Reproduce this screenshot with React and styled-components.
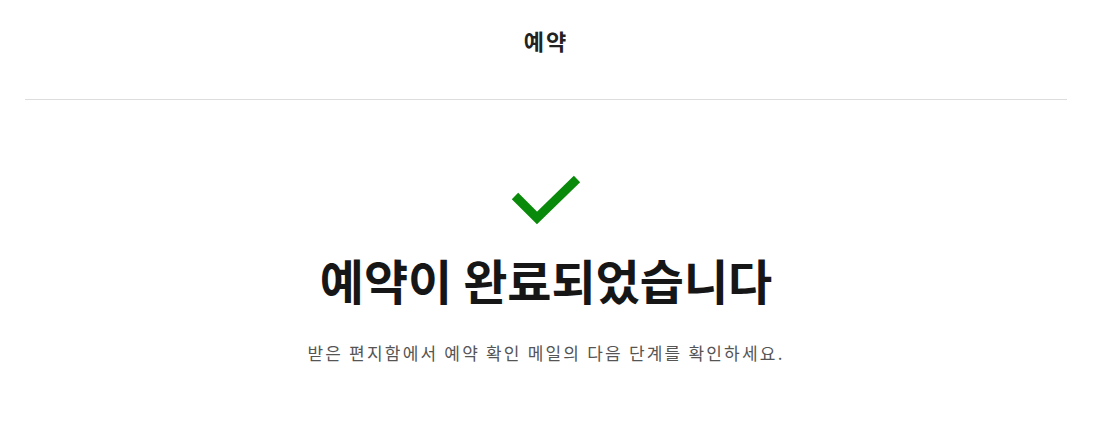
import React from "react";
import styled, { createGlobalStyle } from "styled-components";

const GlobalStyle = createGlobalStyle`
  html, body {
    margin: 0;
    padding: 0;
    background: #fff;
  }
  body {
    font-family: "Noto Sans CJK KR", "Noto Sans", sans-serif;
    color: #222;
  }
`;

const Page = styled.div`
  display: flex;
  flex-direction: column;
  padding: 0 26px 0 25px;
`;

const Header = styled.header`
  height: 75px;
  padding-top: 24px;
  display: flex;
  align-items: flex-start;
  justify-content: center;
  border-bottom: 1px solid #ddd;
`;

const HeaderTitle = styled.h1`
  margin: 0;
  font-size: 22px;
  line-height: 33px;
  letter-spacing: 2px;
  font-weight: 700;
  color: #222;
`;

const Body = styled.main`
  display: flex;
  flex-direction: column;
  align-items: center;
  padding-top: 75px;
`;

const Check = styled.svg`
  width: 70px;
  height: 52px;
  display: block;
`;

const Title = styled.h2`
  margin: 21px 0 0;
  font-size: 48px;
  font-weight: 700;
  line-height: 62px;
  color: #161616;
`;

const Message = styled.p`
  margin: 30px 0 0;
  font-size: 17px;
  line-height: 25px;
  letter-spacing: 2.2px;
  color: #555;
`;

export default function App() {
  return (
    <>
      <GlobalStyle />
      <Page>
        <Header>
          <HeaderTitle>예약</HeaderTitle>
        </Header>
        <Body>
          <Check viewBox="0 0 70 52">
            <path d="M4 21 L26 43 L66 4" fill="none" stroke="#0a8a0a" strokeWidth="9" />
          </Check>
          <Title>예약이 완료되었습니다</Title>
          <Message>받은 편지함에서 예약 확인 메일의 다음 단계를 확인하세요.</Message>
        </Body>
      </Page>
    </>
  );
}
